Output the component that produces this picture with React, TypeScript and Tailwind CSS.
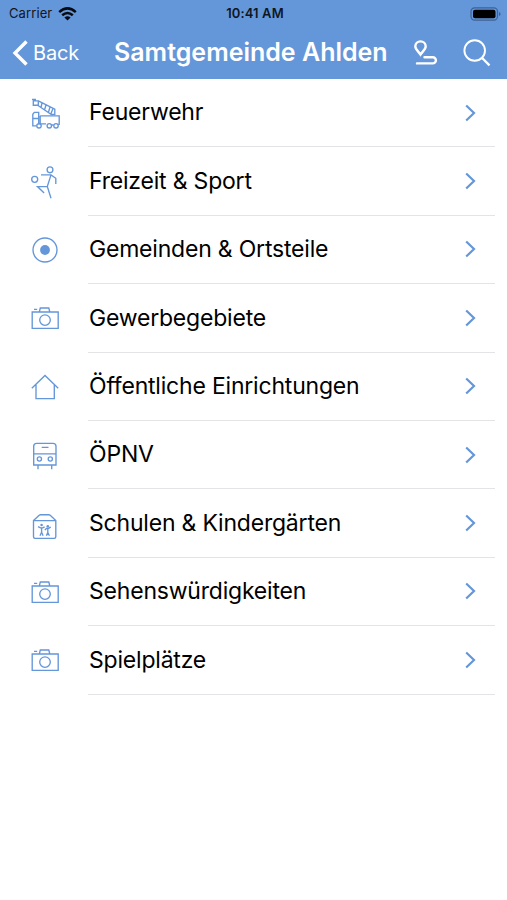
import type { ReactNode } from "react"

const icons: Record<string, ReactNode> = {
  fire: (
    <>
      <path d="M7 6.5h4M8.3 7.5v4.7h5V7.8h-5M13.3 7.8l16.5 8.4v5.3h-3.4L13 12.5M17 10l-1 4.5M21 12l-1.5 5M25 14l-1.5 5M28 15.5l-2 5" />
      <path d="M11.7 32.8H7.8V21.2l1.5-1.8h4.4v12M8 25.5h5.5M15.2 22.8h19v8.6h-1M15.2 22.8v8h5.8M27 32h1.5" />
      <circle cx="14" cy="32.8" r="2.2" />
      <circle cx="24.3" cy="32.8" r="2.2" />
      <circle cx="31" cy="32.8" r="2.2" />
    </>
  ),
  sport: (
    <>
      <circle cx="25" cy="7.8" r="2.9" />
      <circle cx="9.7" cy="17.3" r="3" />
      <path d="M16 12.9h10l4.8 3.4v5.7M26 12.9l-3.7 11.6L26 36.3M22.3 24.6h-9.8l6.6 6.4" />
    </>
  ),
  place: (
    <>
      <circle cx="20" cy="20" r="12" />
      <circle cx="20" cy="20" r="4.9" fill="currentColor" stroke="none" />
    </>
  ),
  camera: (
    <>
      <path d="M7.2 14h26v16.4h-26zM14.3 14l1-4h8.5l1 4M9 11.3h3.2" />
      <circle cx="20" cy="22.1" r="5.3" />
    </>
  ),
  house: <path d="M6.8 21.3L20 8.5l13.2 12.8M11 17.8v13.8h18.3V17.8" />,
  bus: (
    <>
      <path d="M8.7 30V11.3q0-3 3-3H28q3 0 3 3V30zM8.7 18.8H31M16.7 12.4h6.8M13 30v4.3M26.7 30v4.3" />
      <circle cx="14.4" cy="24" r="2.1" />
      <circle cx="25.3" cy="24" r="2.1" />
    </>
  ),
  school: (
    <>
      <path d="M8.5 16.6v16.2q0 1.5 1.5 1.5h19.3q1.5 0 1.5-1.5V16.6l-5.6-5.4q-.6-.5-1.5-.5h-8q-.9 0-1.5.5zM8.5 16.6h22.3" />
      <circle cx="16.6" cy="21" r="1.3" fill="currentColor" stroke="none" />
      <circle cx="22.8" cy="22.3" r="1.3" fill="currentColor" stroke="none" />
      <path d="M13 22.6l2.5 1.2h2.3l1.8-1M16.6 23.8v4.4l-1.6 3.6M16.6 28.2l1.5 3.6M19.8 26l2-1.8h2l2-1.2M22.8 24.5v4l-1.4 3.3M22.8 28.5l1.6 3.3" />
    </>
  ),
}

const items = [
  { label: "Feuerwehr", icon: "fire" },
  { label: "Freizeit & Sport", icon: "sport" },
  { label: "Gemeinden & Ortsteile", icon: "place" },
  { label: "Gewerbegebiete", icon: "camera" },
  { label: "Öffentliche Einrichtungen", icon: "house" },
  { label: "ÖPNV", icon: "bus" },
  { label: "Schulen & Kindergärten", icon: "school" },
  { label: "Sehenswürdigkeiten", icon: "camera" },
  { label: "Spielplätze", icon: "camera" },
]

const StatusBar = () => (
  <div className="flex h-[27px] items-center justify-between pl-[9px] pr-[6px] text-[13px] text-[#10161f]">
    <div className="flex w-[100px] items-center gap-[6px]">
      <span className="tracking-[0.1px]">Carrier</span>
      <svg width="19" height="14" viewBox="0 0 19 14" fill="none" stroke="#050a12" strokeWidth="2.5">
        <path d="M1.2 5.1Q9.5-2.3 17.8 5.1M4.2 8.2q5.3-4.5 10.6 0" />
        <path d="M9.5 13.5L6.4 10.4q3.1-2.5 6.2 0z" fill="#050a12" stroke="none" />
      </svg>
    </div>
    <span className="font-semibold tracking-[0.1px]">10:41 AM</span>
    <div className="flex w-[100px] justify-end">
      <svg width="31" height="14" viewBox="0 0 31 14">
        <rect x="1" y="0.8" width="26.5" height="12.4" rx="3.6" fill="none" stroke="#3f6193" strokeWidth="1.2" />
        <rect x="3" y="2.7" width="22.5" height="8.6" rx="2" fill="#000" />
        <path d="M29 4.9q1.6.6 1.6 2.1T29 9.1z" fill="#3f6193" />
      </svg>
    </div>
  </div>
)

const NavBar = () => (
  <div className="flex h-[52px] items-center pl-3 text-white">
    <button className="flex w-[102px] items-center gap-[5px] text-[20px]">
      <svg width="16" height="26" viewBox="0 0 16 26" fill="none" stroke="currentColor" strokeWidth="3.4">
        <path d="M14.5 1.5L3 13l11.5 11.5" />
      </svg>
      <span className="tracking-[-0.2px]">Back</span>
    </button>
    <h1 className="w-[298px] whitespace-nowrap text-[25px] font-semibold">Samtgemeinde Ahlden</h1>
    <svg className="shrink-0" width="26" height="28" viewBox="0 0 26 28" fill="none" stroke="currentColor" strokeWidth="2.4">
      <path d="M8.5 15.5C6.7 12.8 3.3 10.5 3.3 7.6a5.2 5.2 0 0110.4 0c0 2.9-3.4 5.2-5.2 7.9z" />
      <circle cx="8.5" cy="7.5" r="1" fill="#6496da" stroke="none" />
      <path d="M12.5 18.2h8.3a3.1 3.1 0 010 6.2H5" strokeLinecap="round" />
    </svg>
    <svg className="ml-6 shrink-0" width="30" height="30" viewBox="0 0 30 30" fill="none" stroke="currentColor" strokeWidth="1.9">
      <circle cx="12.7" cy="12.5" r="10.3" />
      <path d="M19.9 19.8l7.6 7.6" strokeWidth="2.3" />
    </svg>
  </div>
)

const App = () => {
  return (
    <div className="min-h-[900px] w-[507px] bg-white font-['Inter','Liberation_Sans',sans-serif]">
      <header className="h-[79px] bg-[#6496da]">
        <StatusBar />
        <NavBar />
      </header>
      <ul>
        {items.map((item) => (
          <li key={item.label} className="flex h-[68.4px] items-center pl-[25px] pr-3">
            <svg className="shrink-0 text-[#6496da]" width="40" height="40" viewBox="0 0 40 40" fill="none" stroke="currentColor" strokeWidth="1.35">
              {icons[item.icon]}
            </svg>
            <div className="ml-[23px] flex h-full flex-1 items-center justify-between border-b border-[#e4e4e6] pl-px pr-[18px]">
              <span className="whitespace-nowrap text-[23px] tracking-[-0.2px] text-black">{item.label}</span>
              <svg className="text-[#6496da]" width="13" height="18" viewBox="0 0 13 18" fill="none" stroke="currentColor" strokeWidth="2.2">
                <path d="M2.2 1.5L10 9l-7.8 7.5" />
              </svg>
            </div>
          </li>
        ))}
      </ul>
    </div>
  )
}

export default App
